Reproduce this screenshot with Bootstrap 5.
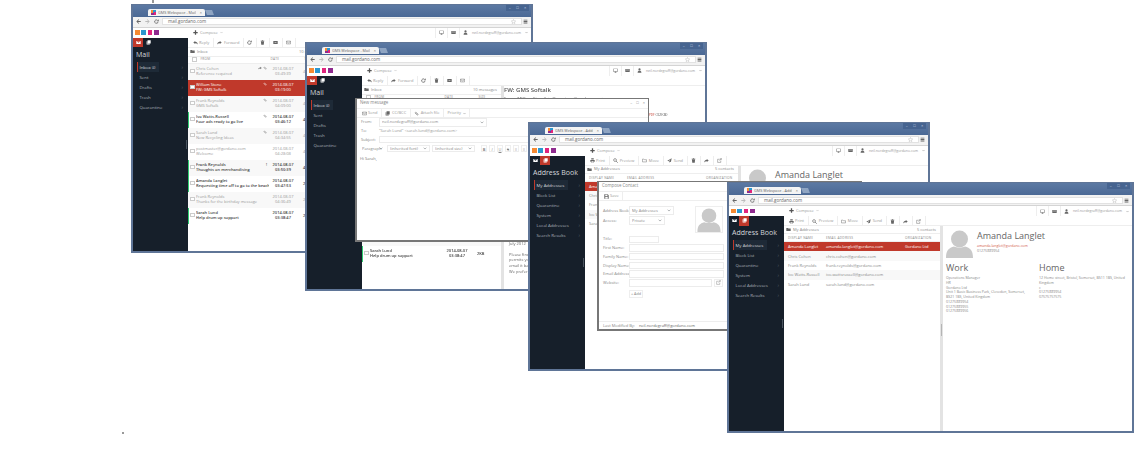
<!DOCTYPE html>
<html lang="en">
<head>
  <meta charset="UTF-8">
  <title>GMS Webspace</title>
  <link href="https://cdn.jsdelivr.net/npm/bootstrap@5.3.0/dist/css/bootstrap.min.css" rel="stylesheet">
  <style>
    body { background: #fff; margin: 0; overflow: hidden; font-family: "Open Sans", sans-serif; }
    #desk { position: relative; width: 1143px; height: 474px; overflow: hidden; filter: blur(.3px); }
    .ico { width: 5px; height: 5px; flex: none; fill: currentColor; }
    .speck { position: absolute; background: #999; }
    #speck1 { left: 152px; top: 0; width: 2px; height: 3px; }
    #speck2 { left: 122px; top: 432px; width: 1.5px; height: 1.5px; }

    /* browser windows on the desktop */
    .gwin { position: absolute; display: flex; flex-direction: column; background: #fff; overflow: hidden; isolation: isolate;
            border: solid #5f7597; border-width: 1px 2px 2px; font-size: 4px; line-height: 5.7px; color: #999; }
    #w1 { left: 131px; top: 4px; width: 402px; height: 248.5px; z-index: 1; }
    #w2 { left: 305px; top: 42px; width: 402px; height: 249px; z-index: 2; }
    #w3 { left: 528px; top: 122px; width: 402px; height: 249px; z-index: 3; }
    #w4 { left: 727px; top: 182px; width: 407px; height: 251px; z-index: 4; }

    .tabbar { flex: none; height: 11.5px; background: linear-gradient(#5c79a3, #4b6995); padding-left: 15px; }
    #w4 .tabbar { height: 12px; }
    .gtab { width: 57px; height: 7px; margin-top: 4px; background: #f4f4f4; color: #666; padding: 0 3px; border-radius: 2px 2px 0 0;
            font-size: 3.8px; line-height: 7px; }
    .fav { width: 5px; height: 5px; background: conic-gradient(#2c97cf 25%, #e0247c 0 50%, #8e2a8e 0 75%, #f58a33 0); margin-right: 2px; flex: none; }
    .newtab { width: 7px; height: 5px; margin: 5px 0 0 1px; background: #8ea4c2; transform: skewX(20deg); }
    .wbtns { width: 23px; height: 6px; margin: 0 2px 0 auto; background: #466490; color: #cdd7e6; font-size: 4px; line-height: 6px; }

    .addrbar { flex: none; height: 11px; background: #f2f2f2; border-bottom: 1px solid #d4d4d4; padding: 0 3px; color: #666; }
    .omni { height: 7px; margin: 0 1px 0 3px; padding: 0 5px; background: #fff; border: 1px solid #e2e2e2; color: #666; font-size: 4.5px; line-height: 5px; }
    .omni .ico { color: #999; }
    .navico { margin-right: 4px; }
    .navico.off { color: #bbb; }

    .appbar { flex: none; height: 10px; background: #fff; }
    .swatches { width: 60px; padding-left: 2px; gap: 1.6px; }
    .swatches i { width: 4.7px; height: 4.7px; }
    .s-or { background: #f58a33; } .s-bl { background: #2c97cf; } .s-pk { background: #e0247c; } .s-pu { background: #8e2a8e; }
    .composebtn { color: #999; gap: 2px; }
    .composebtn .ico:first-child { color: #555; }
    .userbar span.cell { border-left: 1px solid #eee; height: 10px; padding: 0 3px; color: #666; }
    .userbar .who { color: #999; font-size: 3.5px; }
    .chev { width: 3px; height: 3px; }

    .appbody { flex: 1 1 auto; min-height: 0; }

    /* dark folder column */
    .sidenav { position: relative; flex: none; width: 55px; background: #161f2a; color: #a9b0b8; font-size: 4.3px; }
    .sidenav::after { content: ""; position: absolute; right: 1px; top: 48%; width: 1px; height: 9px; background: #4a545f; }
    .sidetop { height: 10px; color: #fff; }
    .sidetop span { width: 10px; height: 9.5px; }
    .sidetop .on { background: #c0392b; }
    .sidehead { color: #d5d8dc; font-size: 7px; font-weight: 400; line-height: 12px; padding: 1px 0 0 3px; height: 14px; white-space: nowrap; }
    .folder { height: 10px; line-height: 10px; padding: 0 5px 0 4px; }
    .folder b { font-weight: 400; padding: 0 4px 0 1.500px; border-left: 1px solid transparent; height: 10px; }
    .folder.cur b { background: #1e2a37; border-left-color: #c0392b; color: #d5d8dc; }
    .folder small { font-size: 3px; }
    .folder em { margin-left: auto; font-style: normal; color: #56606b; font-size: 5px; }

    .cmdbar { flex: none; height: 10px; border-bottom: 1px solid #eee; padding-left: 1px; }
    .tbtn { height: 10px; padding: 0 3.5px; gap: 1.6px; border-right: 1px solid #eee; color: #999; white-space: nowrap; }
    .tbtn .ico { color: #666; }

    /* message list */
    .listpane { flex: none; overflow: hidden; }
    .mailpane { width: 139px; }
    .contactpane { width: 156px; }
    #w3 .contactpane { width: 153px; }
    .folderbar { height: 8px; padding: 0 4px 0 2px; color: #888; gap: 2px; }
    .folderbar .ico { color: #666; }
    .mailhead { height: 8px; border: solid #eee; border-width: 1px 0; font-size: 3.2px; letter-spacing: .2px; color: #888; }
    .mrow { height: 16px; padding-top: 2px; background: #fff; border-left: 1.5px solid transparent; }
    .mrow:nth-child(odd) { background: #f8f8f8; }
    .mrow.unread { border-left-color: #2ecc71; color: #444; font-weight: 600; }
    .mrow.pick { background: #c0392b; color: #fff; }
    .mbox { width: 4.5px; height: 4.5px; margin: 3px 1.5px 0 1px; flex: none; border: 1px solid #ccc; background: #fff; }
    .mtext { width: 73px; flex: none; overflow: hidden; white-space: nowrap; }
    .mfrom { display: flex; justify-content: space-between; padding-right: 2px; }
    .mfrom .ico { color: #777; width: 4px; height: 4px; margin-left: 1px; }
    .pick .mfrom .ico { color: #fff; }
    .mdate { width: 28px; flex: none; text-align: center; white-space: nowrap; }
    .msize { padding: 3px 0 0 6px; white-space: nowrap; }
    .col-from { width: 74px; }
    .col-date { width: 34px; }

    .splitter { position: relative; flex: none; width: 3px; background: #e3e3e3; }
    .splitter::after { content: ""; position: absolute; left: 1px; top: 48%; width: 1px; height: 12px; background: #b5b5b5; }
    .preview { flex: 1 1 auto; min-width: 0; overflow: hidden; color: #666; }
    .subj { font-size: 6px; line-height: 8px; font-weight: 600; color: #555; white-space: nowrap; }
    .fromline { margin-top: 2px; white-space: nowrap; }
    .attach { margin-top: 11px; padding-left: 145px; white-space: nowrap; }
    .attach i { font-style: normal; color: #c0392b; font-size: 3px; }
    .bodytext { margin-top: 116px; padding-left: 5px; white-space: nowrap; }
    .bodytext p { margin: 0 0 5.4px; }

    /* contact table */
    .ctable { width: 156px; table-layout: fixed; margin: 0; font-size: 4px; line-height: 5px; border-collapse: collapse; }
    #w3 .ctable { width: 153px; }
    .ctable th, .ctable td { padding: 2.2px 0 2.2px 4px; border: 0; color: #888; background: transparent; font-weight: 400; white-space: nowrap; overflow: hidden; box-shadow: none; }
    .ctable th { font-size: 3.2px; letter-spacing: .25px; border: solid #eee; border-width: 1px 0; color: #888; padding: 1px 0 1px 4px; line-height: 4px; height: 8px; }
    .ctable tr:nth-child(even) td { background: #f8f8f8; }
    .ctable tr.pick td { background: #c0392b; color: #fff; }
    .contactpane .folderbar { height: 7px; }
    .cardtop { gap: 4px; }
    .cardname { font-size: 9px; line-height: 11px; color: #666; margin: 0 0 3.5px; white-space: nowrap; }
    .cardmail { color: #d35a4e; }
    .portrait { width: 27px; height: 28px; flex: none; color: #c9c9c9; fill: currentColor; }
    .cardcols { margin-top: 4.5px; }
    .cardcols h5 { font-size: 9px; line-height: 11px; font-weight: 400; color: #666; margin: 0 0 3px; }
    .cardcols .addr { line-height: 4.75px; color: #888; font-size: 3.55px; white-space: nowrap; }
    .cardcol { width: 93px; flex: none; }
    .contactcard { padding: 3.5px 3px 0; font-size: 3.55px; line-height: 4.75px; color: #888; }

    /* dialogs over the windows */
    .gdlg { position: absolute; background: #fff; border: solid #777; border-width: 1px 1px 2px 2px; color: #999; z-index: 2; }
    #newmsg { left: 48px; top: 55px; width: 294px; height: 144px; }
    #newcontact { left: 67px; top: 58px; width: 265px; height: 150px; }
    .dlgtitle { height: 9.5px; padding: 0 3px; border-bottom: 1px solid #eee; font-size: 4.4px; color: #888; }
    .dlgbtns { margin-left: auto; color: #888; font-size: 4px; }
    .dlgbar { height: 9px; border-bottom: 1px solid #eee; padding-left: 1px; }
    .dlgbar .tbtn { height: 9px; }
    .frow { padding: 0 0 0 4px; height: 8.7px; white-space: nowrap; }
    .frow label { width: 18px; flex: none; color: #888; }
    .mini { min-height: 0; height: 7.5px; padding: 0 2px; font-size: 4px; line-height: 5.5px; color: #888; border: 1px solid #ececec; border-radius: 0; }
    .form-select.mini { padding: 0 2px; background-size: 4px 3px; background-position: right 2px center; }
    .w-from { width: 108px; height: 9px; }
    .w-sub { flex: 1 1 auto; margin-right: 5px; }
    .from-row { height: 9px; }
    .edrow { margin-top: .5px; padding-left: 3px; gap: 2px; height: 8px; }
    .edrow .form-select { width: 43px; height: 7px; }
    .edrow .para { width: 25px; border: 0; }
    .edbtn { width: 6px; height: 7px; line-height: 7px; text-align: center; border: 1px solid #eee; color: #888; font-size: 4px; }
    .edtext { padding: 3.5px 3px; color: #777; }
    .cform { padding: 5px 0 0 0; }
    .cform .frow label { width: 26px; }
    .sel-row { height: 10px !important; }
    .sel-book { width: 45px; height: 9px; }
    .sel-access { width: 36px; height: 9px; }
    .cinput { width: 95px; flex: none; }
    .ctitle { width: 30px; }
    .cweb { width: 83px; flex: none; }
    .extbtn { width: 9px; height: 8px; margin-left: 2px; border: 1px solid #eee; color: #888; }
    .addbtn { margin: 3px 0 0 30px; width: 14px; height: 8px; border: 1px solid #eee; font-size: 3.8px; line-height: 6px; text-align: center; color: #888; }
    .portrait2 { width: 28px; height: 27px; margin-left: 21px; border: 1px solid #eee; color: #c9c9c9; }
    .portrait2 svg { width: 24px; height: 24px; }
    .cgap { height: 2.5px; }
    .cfoot { position: absolute; left: 0; right: 0; bottom: 0; height: 8px; padding-left: 4px; border-top: 1px solid #eee; color: #888; }
    .cfoot span { margin-left: 4px; color: #666; }
    .mainarea { min-width: 0; }
  </style>
</head>
<body>
  <svg width="0" height="0" class="position-absolute">
    <symbol id="i-env" viewBox="0 0 16 16"><path fill-rule="evenodd" d="M1 3h14v10H1zM2 4l6 5 6-5v-.2H2z"/></symbol>
    <symbol id="i-book" viewBox="0 0 16 16"><path d="M5 1h10v10H5zM2 4h2v8h8v2H2z"/></symbol>
    <symbol id="i-back" viewBox="0 0 16 16"><path d="M15 6.500H6l4-4L8.500 1 1 8l7.500 7L10 13.500l-4-4h9z"/></symbol>
    <symbol id="i-fwd" viewBox="0 0 16 16"><path d="M1 6.500h9l-4-4L7.500 1 15 8l-7.500 7L6 13.500l4-4H1z"/></symbol>
    <symbol id="i-reload" viewBox="0 0 16 16"><path d="M13 9a5.500 5.500 0 1 1-2-5" fill="none" stroke="currentColor" stroke-width="2.500"/><path d="M15 1v6H9z"/></symbol>
    <symbol id="i-plus" viewBox="0 0 16 16"><path d="M6 1h4v5h5v4h-5v5H6v-5H1V6h5z"/></symbol>
    <symbol id="i-down" viewBox="0 0 16 16"><path d="M2 5l6 6 6-6" fill="none" stroke="currentColor" stroke-width="2"/></symbol>
    <symbol id="i-reply" viewBox="0 0 16 16"><path d="M7 3 1 8l6 5v-3c3.500 0 6 1 8 4 0-5-3-8.500-8-8.500z"/></symbol>
    <symbol id="i-forward" viewBox="0 0 16 16"><path d="M9 3l6 5-6 5v-3c-3.500 0-6 1-8 4 0-5 3-8.500 8-8.500z"/></symbol>
    <symbol id="i-trash" viewBox="0 0 16 16"><path d="M3 5h10l-1 10H4zM2 2.500h12V4H2zM6 1h4v1H6z"/></symbol>
    <symbol id="i-box" viewBox="0 0 16 16"><path fill-rule="evenodd" d="M1 3h14v10H1zM5 7v1.500h6V7z"/></symbol>
    <symbol id="i-mailo" viewBox="0 0 16 16"><path d="M1.500 3.500h13v9h-13zM1.500 5 8 9l6.500-4" fill="none" stroke="currentColor" stroke-width="1.500"/></symbol>
    <symbol id="i-folder" viewBox="0 0 16 16"><path d="M1 3h5l2 2h7v8H1z"/></symbol>
    <symbol id="i-print" viewBox="0 0 16 16"><path fill-rule="evenodd" d="M4 1h8v4H4zM1 6h14v6h-3v3H4v-3H1zM5 10v4h6v-4z"/></symbol>
    <symbol id="i-search" viewBox="0 0 16 16"><circle cx="6.500" cy="6.500" r="4.500" fill="none" stroke="currentColor" stroke-width="2"/><path d="M10 10l5 5" stroke="currentColor" stroke-width="2.500"/></symbol>
    <symbol id="i-send" viewBox="0 0 16 16"><path d="M15 1 1 9l4 1.500L12 4l-5 7.500V15l2.500-3 3 1z"/></symbol>
    <symbol id="i-move" viewBox="0 0 16 16"><path d="M1.500 3.500h4.500l2 2h6.500v7h-13z" fill="none" stroke="currentColor" stroke-width="1.500"/></symbol>
    <symbol id="i-screen" viewBox="0 0 16 16"><path fill-rule="evenodd" d="M1 2h14v10H9v1.500h2V15H5v-1.500h2V12H1zM2.500 3.500v7h11v-7z"/></symbol>
    <symbol id="i-chat" viewBox="0 0 16 16"><path fill-rule="evenodd" d="M1 3h14v10H1zM3 5.500v1h10v-1zM3 8.500v1h10v-1z"/></symbol>
    <symbol id="i-user" viewBox="0 0 16 16"><circle cx="8" cy="4.500" r="3.500"/><path d="M2 15c0-5 2-6.500 6-6.500s6 1.500 6 6.500z"/></symbol>
    <symbol id="i-star" viewBox="0 0 16 16"><path d="M8 1.500l2 4.500 5 .5-3.700 3.300 1 4.900L8 12.200l-4.300 2.500 1-4.900L1 6.500l5-.5z" fill="none" stroke="currentColor" stroke-width="1"/></symbol>
    <symbol id="i-menu" viewBox="0 0 16 16"><path d="M2 2h12v3H2zM2 6.500h12v3H2zM2 11h12v3H2z"/></symbol>
    <symbol id="i-clip" viewBox="0 0 16 16"><path d="M3 6l6.500 6.500a2 2 0 0 0 3-3L7 4a1.200 1.200 0 0 0-2 2l5 5" fill="none" stroke="currentColor" stroke-width="1.600"/></symbol>
    <symbol id="i-ext" viewBox="0 0 16 16"><path d="M2 4h7M2 4v10h10V8M8 8l6-6M10 2h4v4" fill="none" stroke="currentColor" stroke-width="1.500"/></symbol>
    <symbol id="i-disk" viewBox="0 0 16 16"><path fill-rule="evenodd" d="M1 1h11l3 3v11H1zM4 2v4h7V2zM4 9v5h8V9z"/></symbol>
    <symbol id="i-face" viewBox="0 0 27 28"><circle cx="13.500" cy="9" r="8.500"/><path d="M0 28c0-8 3-10 8-11.500 3 1.500 8 1.500 11 0 5 1.500 8 3.500 8 11.500z"/></symbol>
  </svg>

  <div id="desk"></div>

  <script>
    const ico = (name, cls = '') => `<svg class="ico ${cls}"><use href="#i-${name}"/></svg>`;
    const tbtn = (icon, label) =>
      `<span class="tbtn d-inline-flex align-items-center">${ico(icon)}${label ? `<span>${label}</span>` : ''}</span>`;

    // Browser frame shared by the four windows
    function frame(title) {
      return `
        <div class="tabbar d-flex">
          <div class="gtab d-flex align-items-center"><i class="fav"></i><span class="flex-grow-1 text-nowrap overflow-hidden">GMS Webspace - ${title}</span><span class="ms-1">&times;</span></div>
          <div class="newtab"></div>
          <div class="wbtns d-flex justify-content-around"><span>&ndash;</span><span>&#9633;</span><span>&times;</span></div>
        </div>
        <div class="addrbar d-flex align-items-center">
          ${ico('back', 'navico')}${ico('fwd', 'navico off')}${ico('reload')}
          <div class="omni flex-grow-1 d-flex align-items-center"><span class="flex-grow-1">mail.gordano.com</span>${ico('star')}</div>
          ${ico('menu')}
        </div>
        <div class="appbar d-flex align-items-center">
          <div class="swatches d-flex"><i class="s-or"></i><i class="s-bl"></i><i class="s-pk"></i><i class="s-pu"></i></div>
          <div class="composebtn d-flex align-items-center">${ico('plus')}<span>Compose</span>${ico('down', 'chev')}</div>
          <div class="userbar ms-auto d-flex align-items-center">
            <span class="cell d-flex align-items-center">${ico('screen')}</span>
            <span class="cell d-flex align-items-center">${ico('chat')}</span>
            <span class="cell d-flex align-items-center gap-1">${ico('user')}<span class="who text-nowrap">neil.nordegraff@gordano.com</span>${ico('down', 'chev')}</span>
          </div>
        </div>`;
    }

    function sidebar(heading, folders, bookActive) {
      const items = folders.map((f, i) =>
        `<div class="folder d-flex ${i === 0 ? 'cur' : ''}"><b class="text-nowrap">${f}</b><em>&rsaquo;</em></div>`).join('');
      return `
        <div class="sidenav">
          <div class="sidetop d-flex">
            <span class="d-flex align-items-center justify-content-center ${bookActive ? '' : 'on'}">${ico('env')}</span>
            <span class="d-flex align-items-center justify-content-center ${bookActive ? 'on' : ''}">${ico('book')}</span>
          </div>
          <div class="sidehead">${heading}</div>
          ${items}
        </div>`;
    }

    const mails = [
      ['Chris Cohen', 'Reference required', '03:49:39', '4KB', '', 'reply clip'],
      ['William Stone', 'FW: GMS Softalk', '03:19:00', '', 'pick', 'clip'],
      ['Frank Reynolds', 'GMS Softalk', '04:09:00', '4KB', '', 'clip'],
      ['Ivo Watts-Russell', 'Four ads ready to go live', '03:46:12', '4KB', 'unread', 'clip'],
      ['Sarah Lund', 'New Recycling Ideas', '04:34:55', '4KB', '', 'clip'],
      ['postmaster@gordano.com', 'Welcome', '04:28:08', '4KB', '', ''],
      ['Frank Reynolds', 'Thoughts on merchandising', '03:50:39', '4KB', 'unread', ''],
      ['Amanda Langlet', 'Requesting time off to go to the beach', '03:47:53', '2KB', 'unread', ''],
      ['Frank Reynolds', 'Thanks for the birthday message', '04:36:49', '2KB', '', ''],
      ['Sarah Lund', 'Help drum up support', '03:38:47', '2KB', 'unread', '']
    ];

    function mailRow(m) {
      const icons = m[5] ? m[5].split(' ').map(n => ico(n === 'reply' ? 'forward' : n)).join('') : '';
      return `
        <div class="mrow d-flex ${m[4]}">
          <i class="mbox"></i>
          <div class="mtext">
            <div class="mfrom"><span>${m[0]}</span><span class="d-flex align-items-center">${icons}${m[0] === 'Frank Reynolds' && m[4] === 'unread' ? '!' : ''}</span></div>
            <div class="overflow-hidden">${m[1]}</div>
          </div>
          <div class="mdate"><div>2014-08-07</div><div>${m[2]}</div></div>
          <div class="msize">${m[3]}</div>
        </div>`;
    }

    function mailList() {
      return `
        <div class="listpane mailpane">
          <div class="folderbar d-flex align-items-center">${ico('folder')}<span>Inbox</span><span class="ms-auto">10 messages</span></div>
          <div class="mailhead d-flex align-items-center"><i class="mbox m-0 ms-1"></i><span class="col-from ps-1">FROM</span><span class="col-date">DATE</span><span>SIZE</span></div>
          <div>${mails.map(mailRow).join('')}</div>
        </div>`;
    }

    const mailTools = `<div class="cmdbar d-flex">${tbtn('reply', 'Reply')}${tbtn('forward', 'Forward')}${tbtn('reload')}${tbtn('trash')}${tbtn('box')}${tbtn('mailo')}</div>`;
    const bookTools = `<div class="cmdbar d-flex">${tbtn('print', 'Print')}${tbtn('search', 'Preview')}${tbtn('move', 'Move')}${tbtn('send', 'Send')}${tbtn('trash')}${tbtn('forward')}${tbtn('ext')}</div>`;

    const contacts = [
      ['Amanda Langlet', 'amanda.langlet@gordano.com', 'Gordano Ltd'],
      ['Chris Cohen', 'chris.cohen@gordano.com', ''],
      ['Frank Reynolds', 'frank.reynolds@gordano.com', ''],
      ['Ivo Watts-Russell', 'ivo.wattsrussell@gordano.com', ''],
      ['Sarah Lund', 'sarah.lund@gordano.com', '']
    ];

    function contactPane() {
      const rows = contacts.map((c, i) =>
        `<tr class="${i === 0 ? 'pick' : ''}"><td>${c[0]}</td><td>${c[1]}</td><td>${c[2]}</td></tr>`).join('');
      return `
        <div class="listpane contactpane">
          <div class="folderbar d-flex align-items-center">${ico('folder')}<span>My Addresses</span><span class="ms-auto">5 contacts</span></div>
          <table class="table ctable">
            <colgroup><col style="width:38px"><col style="width:79px"><col></colgroup>
            <thead><tr><th>DISPLAY NAME</th><th>EMAIL ADDRESS</th><th>ORGANIZATION</th></tr></thead>
            <tbody>${rows}</tbody>
          </table>
        </div>
        <div class="splitter"></div>
        <div class="preview contactcard">
          <div class="cardtop d-flex">
            <svg class="portrait"><use href="#i-face"/></svg>
            <div>
              <div class="cardname">Amanda Langlet</div>
              <div class="cardmail">amanda.langlet@gordano.com</div>
              <div>01275889954</div>
            </div>
          </div>
          <div class="cardcols d-flex">
            <div class="cardcol">
              <h5>Work</h5>
              <div class="addr">Operations Manager<br>HR<br>Gordano Ltd<br>Unit 1 Basic Business Park, Clevedon, Somerset,<br>BS21 1BS, United Kingdom<br>01275889954<br>01275889955<br>01275889956</div>
            </div>
            <div class="cardcol">
              <h5>Home</h5>
              <div class="addr">12 Home street, Bristol, Somerset, BS11 1BS, United<br>Kingdom<br>c<br>01275889954<br>07575757575</div>
            </div>
          </div>
        </div>`;
    }

    const newMessage = `
      <div id="newmsg" class="gdlg">
        <div class="dlgtitle d-flex align-items-center"><span>New message</span><span class="dlgbtns d-flex gap-1"><span>&ndash;</span><span>&#9633;</span><span>&times;</span></span></div>
        <div class="dlgbar d-flex">${tbtn('mailo', 'Send')}${tbtn('book', 'CC/BCC')}${tbtn('clip', 'Attach file')}<span class="tbtn d-inline-flex align-items-center">Priority ${ico('down', 'chev')}</span></div>
        <div class="frow from-row d-flex align-items-center"><label>From:</label><select class="form-select mini w-from"><option>neil.nordegraff@gordano.com</option></select></div>
        <div class="frow d-flex align-items-center"><label>To:</label><span>"Sarah Lund" &lt;sarah.lund@gordano.com&gt;</span></div>
        <div class="frow d-flex align-items-center"><label>Subject:</label><input class="form-control mini w-sub" type="text"></div>
        <div class="edrow d-flex align-items-center">
          <select class="form-select mini para"><option>Paragraph</option></select>
          <select class="form-select mini"><option>(inherited font)</option></select>
          <select class="form-select mini"><option>(inherited size)</option></select>
          <span class="edbtn ms-1 fw-bold">B</span><span class="edbtn fst-italic">I</span><span class="edbtn text-decoration-underline">U</span><span class="edbtn text-decoration-line-through">S</span><span class="edbtn">&equiv;</span><span class="edbtn">&equiv;</span>
        </div>
        <div class="edtext">Hi Sarah,</div>
      </div>`;

    const cformRow = (label, cls) =>
      `<div class="frow d-flex align-items-center"><label>${label}</label><input class="form-control mini ${cls}" type="text"></div>`;

    const newContact = `
      <div id="newcontact" class="gdlg">
        <div class="dlgtitle d-flex align-items-center"><span>Compose Contact</span></div>
        <div class="dlgbar d-flex">${tbtn('disk', 'Save')}</div>
        <div class="cform">
          <div class="d-flex">
            <div>
              <div class="frow sel-row d-flex align-items-center"><label>Address Book:</label><select class="form-select mini sel-book"><option>My Addresses</option></select></div>
              <div class="frow sel-row d-flex align-items-center"><label>Access:</label><select class="form-select mini sel-access"><option>Private</option></select></div>
            </div>
            <div class="portrait2 d-flex align-items-end justify-content-center"><svg class="ico"><use href="#i-face"/></svg></div>
          </div>
          <div class="cgap"></div>
          ${cformRow('Title:', 'ctitle')}
          ${cformRow('First Name:', 'cinput')}
          ${cformRow('Family Name:', 'cinput')}
          ${cformRow('Display Name:', 'cinput')}
          ${cformRow('Email Address:', 'cinput')}
          <div class="frow d-flex align-items-center"><label>Website:</label><input class="form-control mini cweb" type="text"><span class="extbtn d-flex align-items-center justify-content-center">${ico('ext')}</span></div>
          <div class="addbtn">+ Add</div>
        </div>
        <div class="cfoot d-flex align-items-center">Last Modified By:<span>neil.nordegraff@gordano.com</span></div>
      </div>`;

    const mailPreview = `
      <div class="splitter"></div>
      <div class="preview">
        <div class="subj">FW: GMS Softalk</div>
        <div class="fromline">From: &nbsp;"William Stone" &lt;william.stone@gordano.com&gt;</div>
        <div class="attach"><i>PDF</i> (32KB)</div>
        <div class="bodytext">
          <p class="mb-0">Attendees</p><p>July 2012</p>
          <p class="mb-0">Please find the attached document</p><p class="mb-0">permits your attendance</p><p class="mb-0">email it back to us</p><p>We prefer</p>
        </div>
      </div>`;

    function win(id, title, heading, folders, bookActive, main) {
      return `
        <section id="${id}" class="gwin">
          ${frame(title)}
          <div class="appbody d-flex">
            ${sidebar(heading, folders, bookActive)}
            <div class="mainarea flex-grow-1 d-flex flex-column">${main}</div>
          </div>
        </section>`;
    }

    const mailFolders = ['Inbox <small>(4)</small>', 'Sent', 'Drafts', 'Trash', 'Quarantine'];
    const bookFolders = ['My Addresses', 'Block List', 'Quarantine', 'System', 'Local Addresses', 'Search Results'];

    document.getElementById('desk').innerHTML =
      '<i id="speck1" class="speck"></i><i id="speck2" class="speck"></i>' +
      win('w1', 'Mail', 'Mail', mailFolders, false, `${mailTools}<div class="d-flex flex-grow-1">${mailList()}</div>`) +
      win('w2', 'Mail', 'Mail', mailFolders, false, `${mailTools}<div class="d-flex flex-grow-1">${mailList()}${mailPreview}</div>${newMessage}`) +
      win('w3', 'Address Book', 'Address Book', bookFolders, true, `${bookTools}<div class="d-flex flex-grow-1">${contactPane()}</div>${newContact}`) +
      win('w4', 'Address Book', 'Address Book', bookFolders, true, `${bookTools}<div class="d-flex flex-grow-1">${contactPane()}</div>`);
  </script>
  <script src="https://cdn.jsdelivr.net/npm/bootstrap@5.3.0/dist/js/bootstrap.bundle.min.js"></script>
</body>
</html>
